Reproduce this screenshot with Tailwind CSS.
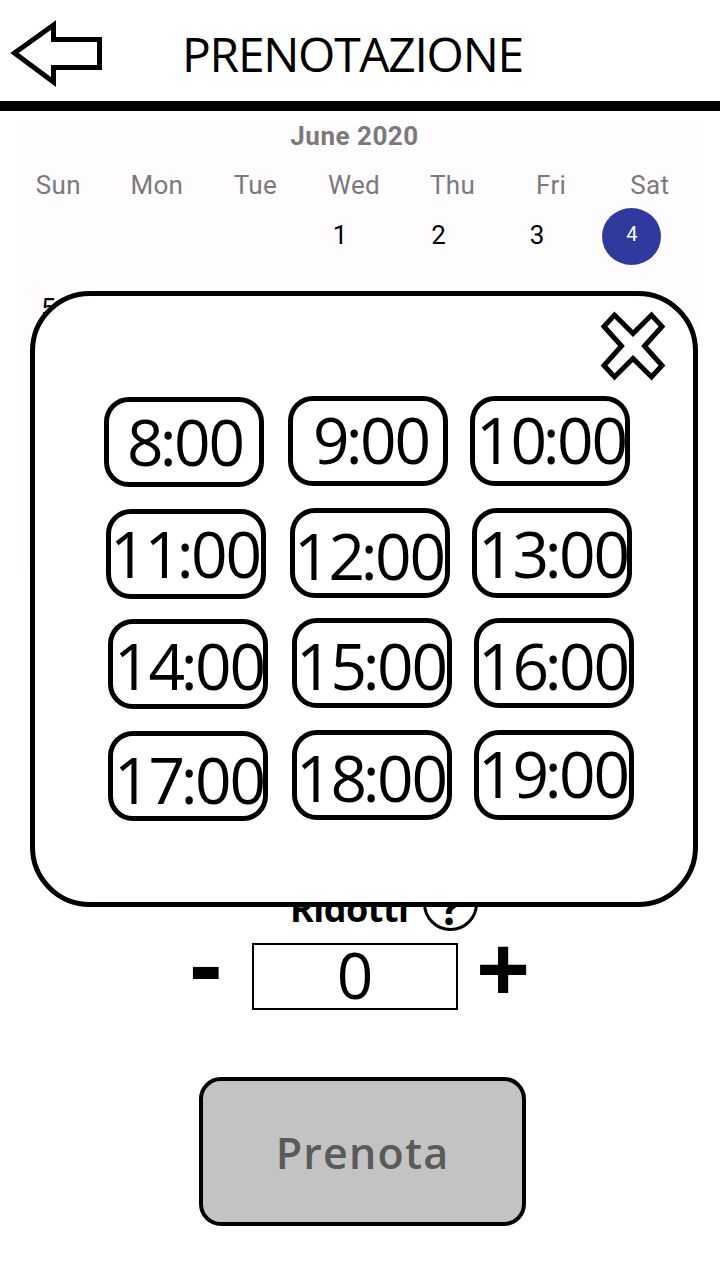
<!DOCTYPE html>
<html lang="it">
<head>
<meta charset="utf-8">
<title>Prenotazione</title>
<script src="https://cdn.jsdelivr.net/npm/@tailwindcss/browser@4"></script>
</head>
<body class="bg-white">
<div class="relative flex h-[1280px] w-[720px] flex-col overflow-hidden bg-white font-['Open_Sans',sans-serif] text-black">
  <header class="flex h-[111px] shrink-0 items-start border-b-10 border-black">
    <svg class="mt-[18px] ml-[8px] h-[72px] w-[98px] shrink-0" viewBox="8 18 98 72" fill="none" stroke="#000" stroke-width="5"><path d="M14.5 53 53.5 25V39.5H99.5V67.5H53.5V82Z"/></svg>
    <h1 class="mt-[22px] ml-[76px] text-[48px] leading-[64px] tracking-[-1.3px] whitespace-nowrap">PRENOTAZIONE</h1>
  </header>

  <main class="flex flex-1 flex-col">
    <section class="mx-[17px] flex h-[459px] w-[682px] shrink-0 flex-col bg-linear-to-b from-white to-[#fefcfe] to-[30px] font-['Roboto',sans-serif] text-[26px]">
      <h2 class="mt-[10px] pr-[7px] text-center leading-[30px] font-bold tracking-[0.5px] text-[#7b797c]">June 2020</h2>
      <div class="mt-[19px] -ml-[8px] grid w-[690px] grid-cols-7 text-center leading-[30px] tracking-[0.3px] text-[#7b797c]">
        <span>Sun</span><span>Mon</span><span>Tue</span><span>Wed</span><span>Thu</span><span>Fri</span><span>Sat</span>
      </div>
      <div class="mt-[8px] -ml-[22px] grid h-[57px] w-[690px] grid-cols-7 text-center leading-[54px]">
        <span class="col-start-4">1</span><span>2</span><span>3</span>
        <span class="ml-[16px] h-[57px] w-[59px] rounded-[50%] bg-[#303a9e] text-[20px] leading-[52px] text-white">4</span>
      </div>
      <div class="mt-[28px] ml-[24px] leading-[30px]">5</div>
    </section>

    <section class="mt-[306px] flex flex-col">
      <div class="flex h-[55px] items-start">
        <span class="mt-[9px] ml-[290px] w-[133px] text-[36px] leading-[48px] font-bold tracking-[-0.5px] whitespace-nowrap">Ridotti</span>
        <span class="flex size-[55px] items-center justify-center rounded-full border-3 border-black pt-[8px] text-[44px] leading-[50px] font-bold">?</span>
      </div>
      <div class="mt-[12px] flex h-[67px] items-start">
        <button class="-mt-[15px] ml-[190px] w-[62px] text-left text-[98px] leading-[67px] font-bold">-</button>
        <div class="h-[67px] w-[206px] border-[2.5px] border-black text-center text-[64px] leading-[60px]">0</div>
        <button class="-mt-[9px] ml-[18px] w-[60px] text-left text-[95px] leading-[67px] font-bold">+</button>
      </div>
    </section>

    <button class="mt-[67px] ml-[199px] h-[149px] w-[327px] shrink-0 rounded-[22px] border-4 border-black bg-[#c3c3c3] pt-[3px] text-[43px] font-semibold tracking-[1.2px] text-[#5a5a5a]">Prenota</button>
  </main>

  <div class="absolute top-[291px] left-[30px] flex h-[616px] w-[668px] flex-col rounded-[60px] border-5 border-black bg-white" role="dialog">
    <button class="mt-[12px] ml-[562px] h-[76px] w-[72px] shrink-0"><svg class="h-[76px] w-[72px]" viewBox="597 308 72 76" fill="none" stroke="#000" stroke-width="5"><path d="M614.5 315 633 333.5 651.5 315 662 326.5 644.5 346 662 365.500 651.5 377 633 358.500 614.5 377 604 365.500 621.5 346 604 326.5Z"/></svg></button>

    <div class="mt-[12px] ml-[69px] flex text-[64px] leading-[68px] tracking-[-2.2px] whitespace-nowrap">
      <div class="mt-[1px] h-[90px] w-[160px] rounded-[25px] border-5 border-black pt-[6px] pl-[18px]">8<span class="-ml-[1.6px] -mr-[0.4px]">:</span>00</div>
      <div class="ml-[24px] h-[90px] w-[160px] rounded-[25px] border-5 border-black pt-[5px] pl-[20px]">9<span class="-ml-[1.6px] -mr-[0.4px]">:</span>00</div>
      <div class="ml-[22px] h-[90px] w-[160px] rounded-[25px] border-5 border-black pt-[5px]"><span class="ml-[1px]">10<span class="-ml-[2px] -mr-[0.4px]">:</span>00</span></div>
    </div>
    <div class="mt-[21px] ml-[71px] flex text-[64px] leading-[68px] tracking-[-2.2px] whitespace-nowrap">
      <div class="mt-[1px] h-[90px] w-[160px] rounded-[25px] border-5 border-black pt-[6px]"><span class="-ml-[1px]">11<span class="-ml-[2px] -mr-[0.4px]">:</span>00</span></div>
      <div class="ml-[24px] h-[90px] w-[160px] rounded-[25px] border-5 border-black pt-[9px]"><span class="-ml-[1px]">12<span class="-ml-[2px] -mr-[0.4px]">:</span>00</span></div>
      <div class="ml-[22px] h-[90px] w-[160px] rounded-[25px] border-5 border-black pt-[7px]"><span class="ml-[1px]">13<span class="-ml-[2px] -mr-[0.4px]">:</span>00</span></div>
    </div>
    <div class="mt-[19px] ml-[73px] flex text-[64px] leading-[68px] tracking-[-2.2px] whitespace-nowrap">
      <div class="mt-[1px] h-[90px] w-[160px] rounded-[25px] border-5 border-black pt-[8px]"><span class="ml-[1px]">14<span class="-ml-[2px] -mr-[0.4px]">:</span>00</span></div>
      <div class="ml-[24px] h-[90px] w-[160px] rounded-[25px] border-5 border-black pt-[9px]"><span class="-ml-[1px]">15<span class="-ml-[2px] -mr-[0.4px]">:</span>00</span></div>
      <div class="ml-[22px] h-[90px] w-[160px] rounded-[25px] border-5 border-black pt-[9px]"><span class="-ml-[1px]">16<span class="-ml-[2px] -mr-[0.4px]">:</span>00</span></div>
    </div>
    <div class="mt-[21px] ml-[73px] flex text-[64px] leading-[68px] tracking-[-2.2px] whitespace-nowrap">
      <div class="mt-[1px] h-[90px] w-[160px] rounded-[25px] border-5 border-black pt-[10px]"><span class="ml-[1px]">17<span class="-ml-[2px] -mr-[0.4px]">:</span>00</span></div>
      <div class="ml-[24px] h-[90px] w-[160px] rounded-[25px] border-5 border-black pt-[9px]"><span class="-ml-[1px]">18<span class="-ml-[2px] -mr-[0.4px]">:</span>00</span></div>
      <div class="ml-[22px] h-[90px] w-[160px] rounded-[25px] border-5 border-black pt-[5px]"><span class="-ml-[1px]">19<span class="-ml-[2px] -mr-[0.4px]">:</span>00</span></div>
    </div>
  </div>
</div>
</body>
</html>
